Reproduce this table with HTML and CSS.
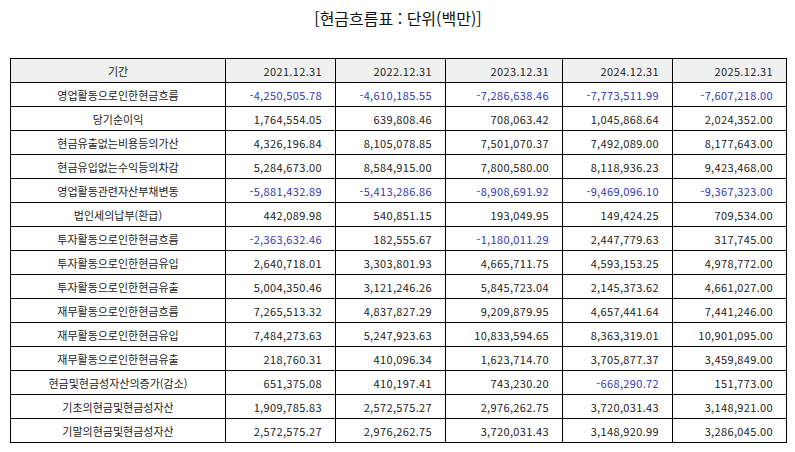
FILE: index.html
```html
<!DOCTYPE html>
<html lang="ko">
<head>
<meta charset="utf-8">
<title>현금흐름표</title>
<link rel="stylesheet" href="styles.css">
</head>
<body>
<div class="page">
  <h1 class="title">[현금흐름표 : 단위(백만)]</h1>
  <table class="cf">
    <colgroup>
      <col class="c-label"><col class="c-a"><col class="c-b"><col class="c-c"><col class="c-d"><col class="c-e">
    </colgroup>
    <thead>
      <tr><th class="lbl">기간</th><th>2021.12.31</th><th>2022.12.31</th><th>2023.12.31</th><th>2024.12.31</th><th>2025.12.31</th></tr>
    </thead>
    <tbody>
      <tr><td class="lbl">영업활동으로인한현금흐름</td><td class="neg">-4,250,505.78</td><td class="neg">-4,610,185.55</td><td class="neg">-7,286,638.46</td><td class="neg">-7,773,511.99</td><td class="neg">-7,607,218.00</td></tr>
      <tr><td class="lbl">당기순이익</td><td>1,764,554.05</td><td>639,808.46</td><td>708,063.42</td><td>1,045,868.64</td><td>2,024,352.00</td></tr>
      <tr><td class="lbl">현금유출없는비용등의가산</td><td>4,326,196.84</td><td>8,105,078.85</td><td>7,501,070.37</td><td>7,492,089.00</td><td>8,177,643.00</td></tr>
      <tr><td class="lbl">현금유입없는수익등의차감</td><td>5,284,673.00</td><td>8,584,915.00</td><td>7,800,580.00</td><td>8,118,936.23</td><td>9,423,468.00</td></tr>
      <tr><td class="lbl">영업활동관련자산부채변동</td><td class="neg">-5,881,432.89</td><td class="neg">-5,413,286.86</td><td class="neg">-8,908,691.92</td><td class="neg">-9,469,096.10</td><td class="neg">-9,367,323.00</td></tr>
      <tr><td class="lbl">법인세의납부(환급)</td><td>442,089.98</td><td>540,851.15</td><td>193,049.95</td><td>149,424.25</td><td>709,534.00</td></tr>
      <tr><td class="lbl">투자활동으로인한현금흐름</td><td class="neg">-2,363,632.46</td><td>182,555.67</td><td class="neg">-1,180,011.29</td><td>2,447,779.63</td><td>317,745.00</td></tr>
      <tr><td class="lbl">투자활동으로인한현금유입</td><td>2,640,718.01</td><td>3,303,801.93</td><td>4,665,711.75</td><td>4,593,153.25</td><td>4,978,772.00</td></tr>
      <tr><td class="lbl">투자활동으로인한현금유출</td><td>5,004,350.46</td><td>3,121,246.26</td><td>5,845,723.04</td><td>2,145,373.62</td><td>4,661,027.00</td></tr>
      <tr><td class="lbl">재무활동으로인한현금흐름</td><td>7,265,513.32</td><td>4,837,827.29</td><td>9,209,879.95</td><td>4,657,441.64</td><td>7,441,246.00</td></tr>
      <tr><td class="lbl">재무활동으로인한현금유입</td><td>7,484,273.63</td><td>5,247,923.63</td><td>10,833,594.65</td><td>8,363,319.01</td><td>10,901,095.00</td></tr>
      <tr><td class="lbl">재무활동으로인한현금유출</td><td>218,760.31</td><td>410,096.34</td><td>1,623,714.70</td><td>3,705,877.37</td><td>3,459,849.00</td></tr>
      <tr><td class="lbl">현금및현금성자산의증가(감소)</td><td>651,375.08</td><td>410,197.41</td><td>743,230.20</td><td class="neg">-668,290.72</td><td>151,773.00</td></tr>
      <tr><td class="lbl">기초의현금및현금성자산</td><td>1,909,785.83</td><td>2,572,575.27</td><td>2,976,262.75</td><td>3,720,031.43</td><td>3,148,921.00</td></tr>
      <tr><td class="lbl">기말의현금및현금성자산</td><td>2,572,575.27</td><td>2,976,262.75</td><td>3,720,031.43</td><td>3,148,920.99</td><td>3,286,045.00</td></tr>
    </tbody>
  </table>
</div>
</body>
</html>
```

FILE: styles.css
```css
html, body {
  margin: 0;
  padding: 0;
  background: #ffffff;
}

.page {
  padding: 0 9px 0 10px;
  font-family: "Noto Sans CJK KR", "Noto Sans", sans-serif;
  color: #222222;
}

.title {
  margin: 0;
  height: 58px;
  padding-top: 5px;
  box-sizing: border-box;
  text-align: center;
  font-size: 16px;
  font-weight: normal;
  line-height: 26px;
  color: #111111;
}

.cf {
  width: 776px;
  border-collapse: collapse;
  table-layout: fixed;
  font-size: 11px;
}

.c-label { width: 215px; }
.c-a { width: 110px; }
.c-b { width: 110px; }
.c-c { width: 117px; }
.c-d { width: 110px; }
.c-e { width: 114px; }

.cf th,
.cf td {
  border: 1px solid #000000;
  height: 23px;
  padding: 0 13px 0 4px;
  text-align: right;
  font-weight: normal;
  line-height: 14px;
  letter-spacing: 0.35px;
  white-space: nowrap;
}

.cf thead th {
  background: #f0f0f0;
}

.cf .lbl {
  text-align: center;
  padding: 0 4px;
  letter-spacing: 0;
}

.cf .neg {
  color: #3434c8;
}
```
